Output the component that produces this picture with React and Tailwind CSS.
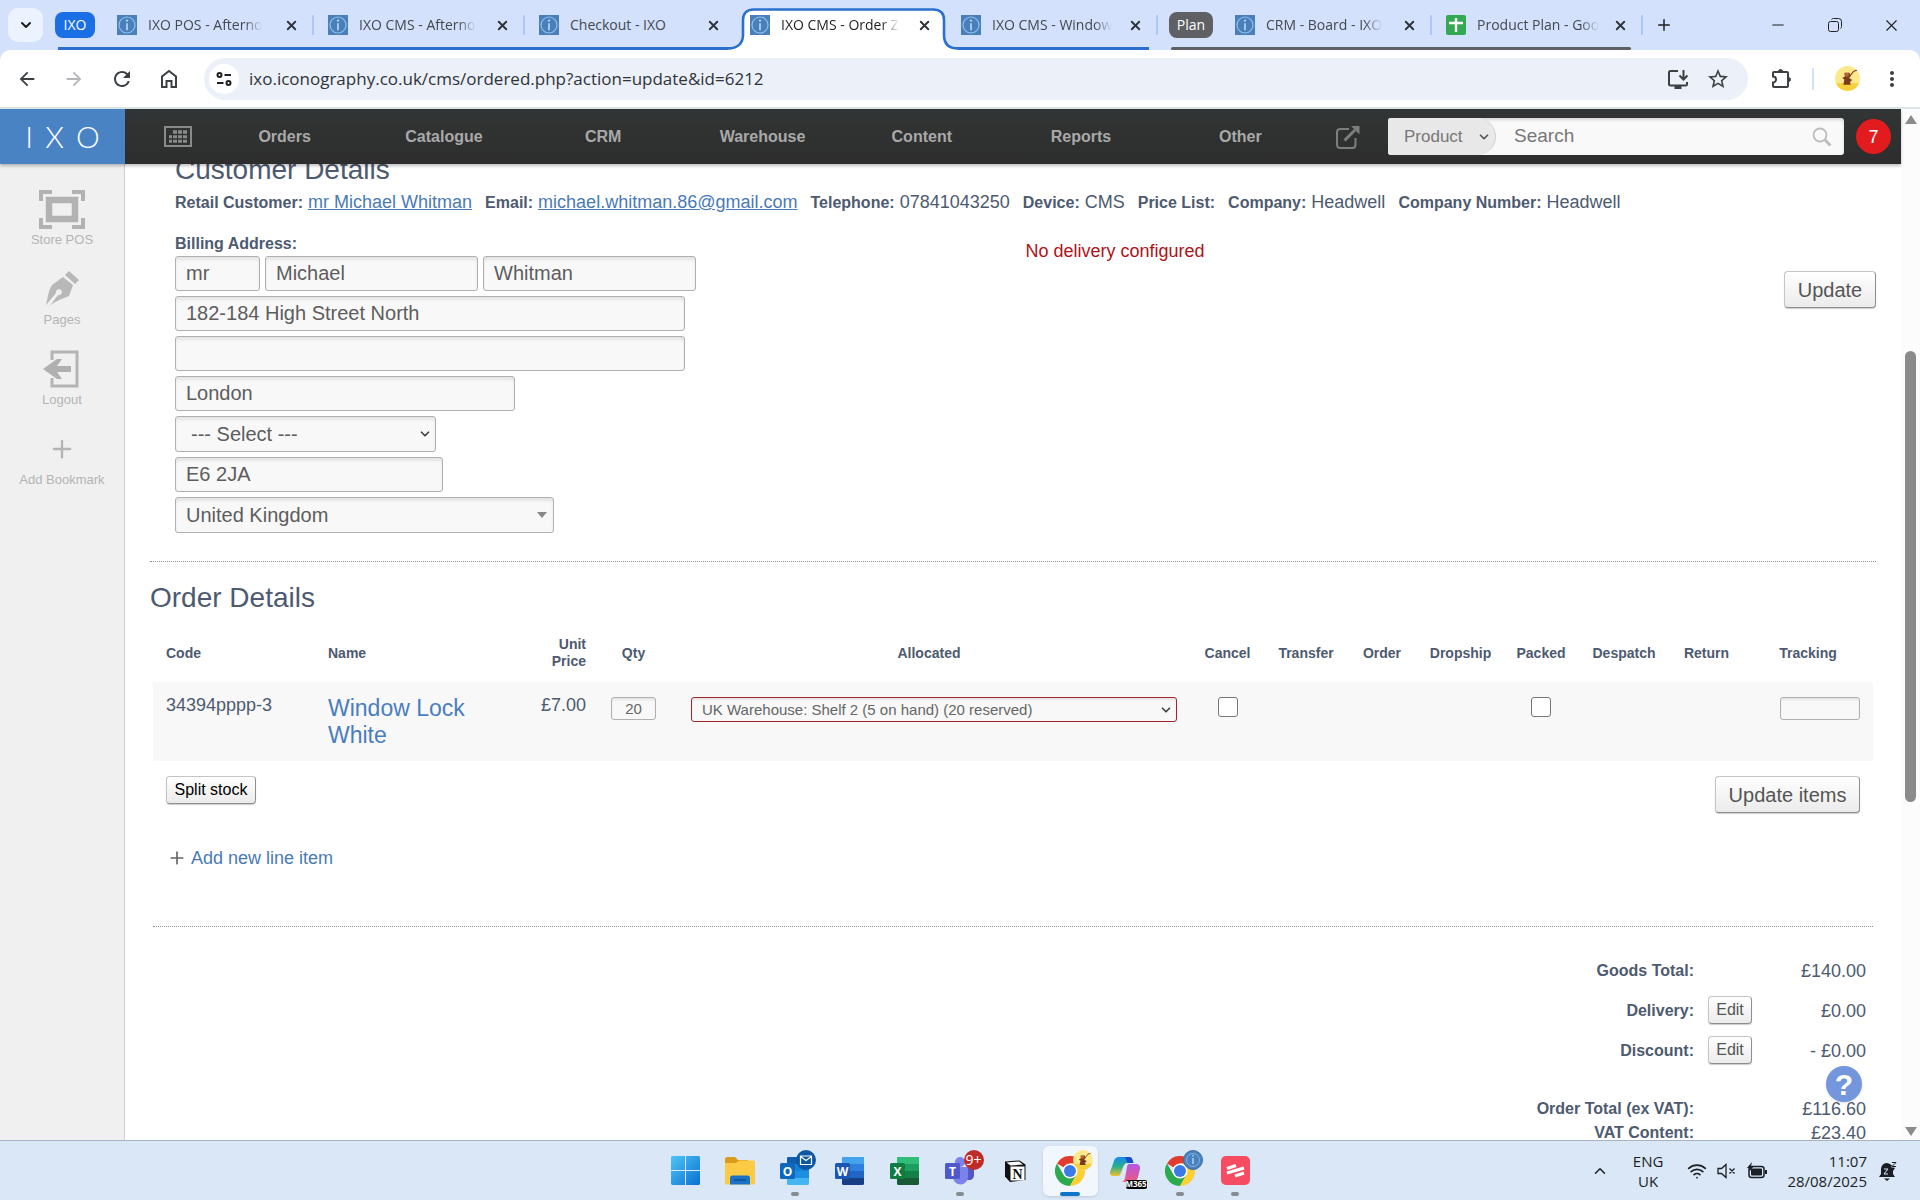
import {
  MdArrowBack,
  MdArrowForward,
  MdRefresh,
  MdStarBorder,
  MdMoreVert,
} from 'react-icons/md';
import { ChevronDown, ChevronUp, Minus, Plus, Wifi, X } from 'lucide-react';

const GROUP_TABS = [
  { id: 1, title: 'IXO POS - Afterno' },
  { id: 2, title: 'IXO CMS - Afterno' },
  { id: 3, title: 'Checkout - IXO', short: true },
  { id: 4, title: 'IXO CMS - Order Z', active: true },
  { id: 5, title: 'IXO CMS - Window' },
];

const PLAN_TABS = [
  { id: 6, title: 'CRM - Board - IXO' },
  { id: 7, title: 'Product Plan - Goo', sheet: true },
];

const NAV_ITEMS = ['Orders', 'Catalogue', 'CRM', 'Warehouse', 'Content', 'Reports', 'Other'];

const CUSTOMER_FIELDS = [
  { label: 'Retail Customer:', value: 'mr Michael Whitman', link: true },
  { label: 'Email:', value: 'michael.whitman.86@gmail.com', link: true },
  { label: 'Telephone:', value: '07841043250' },
  { label: 'Device:', value: 'CMS' },
  { label: 'Price List:', value: '' },
  { label: 'Company:', value: 'Headwell' },
  { label: 'Company Number:', value: 'Headwell' },
];

const ACTION_COLUMNS = ['Cancel', 'Transfer', 'Order', 'Dropship', 'Packed', 'Despatch', 'Return'];

function IxoFavicon() {
  return (
    <svg className="h-5 w-5 shrink-0" viewBox="0 0 20 20">
      <rect width="20" height="20" fill="#4a7fb9" />
      <circle cx="10" cy="10" r="8" fill="none" stroke="#8fc0ee" strokeWidth="1.2" />
      <circle cx="10" cy="5.6" r="1.2" fill="#a9d4fa" />
      <path d="M10 8.2v7" stroke="#a9d4fa" strokeWidth="1.8" />
    </svg>
  );
}

function SheetFavicon() {
  return (
    <svg className="h-5 w-5 shrink-0" viewBox="0 0 20 20">
      <rect width="20" height="20" rx="2" fill="#34a853" />
      <path d="M10 3v14M3 8h14" stroke="#fff" strokeWidth="2.4" />
    </svg>
  );
}

function BeeAvatar({ className }) {
  return (
    <svg className={className} viewBox="0 0 24 24">
      <circle cx="12" cy="12" r="12" fill="#fbe98c" />
      <path d="M1 16.5a12 12 0 0 0 22 0z" fill="#f6cf3a" />
      <path d="M9 6.5h5l1 3-1.5 2 3 2-2 1.5.5 3h-7l1-5-2-1.5 2.5-1.5z" fill="#7c3a1c" />
      <circle cx="11.5" cy="8.5" r="2" fill="#b5683a" />
      <path d="M14 10l4-5 3-1" stroke="#7c3a1c" strokeWidth="1" fill="none" />
    </svg>
  );
}

function BrowserTab({ tab }) {
  return (
    <div className="relative flex w-[211px] min-w-0 items-center pr-[15px] pl-[14px]">
      {tab.active && (
        <svg
          className="absolute top-[7px] left-[-8px] h-[43px] w-[230px]"
          viewBox="0 0 230 43"
          preserveAspectRatio="none"
        >
          <path
            d="M0 41.5C9 41.5 15 37 15 28V13C15 6 19 2.5 26 2.5H205C212 2.5 216 6 216 13V28C216 37 221 41.5 230 41.5V43H0z"
            fill="#fff"
          />
          <path
            d="M0 41.5C9 41.5 15 37 15 28V13C15 6 19 2.5 26 2.5H205C212 2.5 216 6 216 13V28C216 37 221 41.5 230 41.5"
            fill="none"
            stroke="#2b70cd"
            strokeWidth="2.6"
          />
        </svg>
      )}
      <div className="relative flex min-w-0 flex-1 items-center">
        {tab.sheet ? <SheetFavicon /> : <IxoFavicon />}
        <span
          className={`ml-[11px] text-sm whitespace-nowrap ${
            tab.short ? '' : '[mask-image:linear-gradient(to_right,#000_85%,transparent)]'
          } ${tab.active ? 'text-[#1f1f1f]' : 'text-[#44484f]'}`}
        >
          {tab.title}
        </span>
      </div>
      <button className="relative shrink-0 text-[#30343a]" aria-label="Close tab">
        <X className="h-[15px] w-[15px]" strokeWidth={3} />
      </button>
    </div>
  );
}

function TabSeparator() {
  return <span className="-ml-[2px] mt-[15px] h-5 w-[2px] shrink-0 rounded bg-[#a8c7fa]" />;
}

function TabStrip() {
  return (
    <div className="flex h-[50px] text-[#1f1f1f]">
      <button
        className="mt-2 ml-2 flex h-[34px] w-[35px] shrink-0 items-center justify-center rounded-[10px] bg-[#edf3fe]"
        aria-label="Search tabs"
      >
        <ChevronDown className="h-4 w-4" strokeWidth={3} />
      </button>

      <div className="relative ml-3 flex min-w-0">
        <div className="absolute right-[9px] bottom-0 left-[3px] h-[3px] bg-[#2b70cd]" />
        <span className="mt-3 mr-2 flex h-[26px] w-10 shrink-0 items-center justify-center rounded-lg bg-[#1b6fe4] text-sm text-white">
          IXO
        </span>
        {GROUP_TABS.map((tab) => (
          <div key={tab.id} className="flex min-w-0">
            <BrowserTab tab={tab} />
            {(tab.id < 3 || tab.id === 5) && <TabSeparator />}
          </div>
        ))}
      </div>

      <div className="relative ml-[11px] flex min-w-0">
        <div className="absolute right-3 bottom-0 left-[2px] h-[3px] rounded bg-[#5e6064]" />
        <span className="mt-3 mr-2 flex h-[26px] w-11 shrink-0 items-center justify-center rounded-lg bg-[#5e6064] text-sm text-white">
          Plan
        </span>
        {PLAN_TABS.map((tab) => (
          <div key={tab.id} className="flex min-w-0">
            <BrowserTab tab={tab} />
            <TabSeparator />
          </div>
        ))}
      </div>

      <button className="ml-3 shrink-0" aria-label="New tab">
        <Plus className="h-[18px] w-[18px]" strokeWidth={2} />
      </button>

      <div className="ml-auto flex shrink-0">
        <button className="flex w-[57px] items-center justify-center" aria-label="Minimise">
          <Minus className="h-[18px] w-[18px]" strokeWidth={1.4} />
        </button>
        <button className="flex w-[57px] items-center justify-center" aria-label="Restore">
          <svg className="h-[14px] w-[14px]" viewBox="0 0 14 14" fill="none" stroke="currentColor">
            <rect x="0.5" y="3.5" width="10" height="10" rx="2" />
            <path d="M3.5 1.5c.4-.7 1-1 2-1h5a3 3 0 0 1 3 3v5c0 1-.3 1.600-1 2" />
          </svg>
        </button>
        <button className="flex w-[57px] items-center justify-center" aria-label="Close">
          <X className="h-[19px] w-[19px]" strokeWidth={1.4} />
        </button>
      </div>
    </div>
  );
}

function Toolbar() {
  return (
    <div className="flex h-[59px] items-center rounded-t-[10px] border-b-2 border-[#dde4e6] bg-white text-[#3c4043]">
      <div className="flex w-[204px] shrink-0 items-center pl-4">
        <button className="w-12" aria-label="Back">
          <MdArrowBack className="h-[22px] w-[22px]" />
        </button>
        <button className="w-12 text-[#b4b6b9]" aria-label="Forward">
          <MdArrowForward className="h-[22px] w-[22px]" />
        </button>
        <button className="w-12" aria-label="Reload">
          <MdRefresh className="h-6 w-6" />
        </button>
        <button className="w-12" aria-label="Home">
          <svg className="h-6 w-6" viewBox="0 0 24 24" fill="none" stroke="currentColor" strokeWidth="2">
            <path d="M5 20V9.500L12 4l7 5.500V20h-4.500v-6h-5v6z" />
          </svg>
        </button>
      </div>

      <div className="flex h-[42px] flex-1 items-center rounded-full bg-[#ebf0f9] pr-[18px] pl-[5px]">
        <button
          className="flex h-[30px] w-[30px] items-center justify-center rounded-full bg-white text-[#1f1f1f]"
          aria-label="View site information"
        >
          <svg className="h-4 w-4" viewBox="0 0 16 16" fill="none" stroke="currentColor" strokeWidth="2">
            <circle cx="3.500" cy="4" r="2" />
            <path d="M8.500 4H15M1 12h6.500" />
            <circle cx="12.500" cy="12" r="2" />
          </svg>
        </button>
        <input
          aria-label="Address"
          className="ml-[10px] min-w-0 flex-1 bg-transparent text-[17px] text-[#30343a] outline-none"
          defaultValue="ixo.iconography.co.uk/cms/ordered.php?action=update&id=6212"
        />
        <button className="mr-4" aria-label="Install app">
          <svg className="h-6 w-6" viewBox="0 0 24 24" fill="none" stroke="currentColor" strokeWidth="2">
            <path d="M12 4H4.500c-1 0-1.500.5-1.500 1.500V17c0 1 .5 1.500 1.500 1.500h15c1 0 1.500-.5 1.500-1.500v-2" />
            <path d="M8.500 20.500h7" strokeWidth="3" />
            <path d="M17.500 3v9M13.500 8.500l4 4 4-4" />
          </svg>
        </button>
        <button aria-label="Bookmark this tab">
          <MdStarBorder className="h-6 w-6" />
        </button>
      </div>

      <div className="flex w-[172px] shrink-0 items-center justify-end pr-4">
        <button className="mr-[19px]" aria-label="Extensions">
          <svg className="h-6 w-6" viewBox="0 0 24 24" fill="none" stroke="currentColor" strokeWidth="2">
            <path d="M5 5h13c.7 0 1 .3 1 1v13c0 .7-.3 1-1 1H5c-.7 0-1-.3-1-1v-3.500a3 3 0 0 0 0-6V6c0-.7.3-1 1-1z" />
            <path d="M9.500 4.500a2 2 0 0 1 4 0zM19.500 10.500a2 2 0 0 1 0 4z" fill="currentColor" strokeWidth="1" />
          </svg>
        </button>
        <span className="mr-[21px] h-[22px] w-[2px] bg-[#d3e1fd]" />
        <button className="mr-5" aria-label="Profile">
          <BeeAvatar className="h-[25px] w-[25px]" />
        </button>
        <button aria-label="Chrome menu">
          <MdMoreVert className="h-6 w-6" />
        </button>
      </div>
    </div>
  );
}

function CalendarIcon() {
  return (
    <svg className="h-[21px] w-7" viewBox="0 0 28 21" fill="none" stroke="#8a8a8a">
      <rect x="1" y="1" width="26" height="19" strokeWidth="2" />
      <path d="M9 6h4M14 6h4M19 6h4" strokeWidth="3.500" />
      <path d="M5 10.800h3M9 10.800h4M14 10.800h4M19 10.800h4" strokeWidth="3" />
      <path d="M5 15.300h3M9 15.300h4M14 15.300h4M19 15.300h4" strokeWidth="3" />
    </svg>
  );
}

function MainNav() {
  return (
    <header className="relative z-10 flex h-[55px] shrink-0 bg-linear-to-b from-[#323535] to-[#2d2d2d] shadow-[0_2px_3px_rgba(0,0,0,0.25)]">
      <a
        href="#home"
        className="flex w-[125px] shrink-0 items-center justify-center gap-3 bg-[#4a83c3] font-['Lato',sans-serif] text-[30px] font-light text-white"
      >
        <span>I</span>
        <span>X</span>
        <span>O</span>
      </a>
      <a href="#calendar" className="flex w-20 shrink-0 items-center justify-end pr-[13px]" aria-label="Calendar">
        <CalendarIcon />
      </a>
      <nav className="flex flex-1">
        {NAV_ITEMS.map((item) => (
          <a
            key={item}
            href={`#${item.toLowerCase()}`}
            className="flex flex-1 items-center justify-center text-base font-bold text-[#a9a9a9]"
          >
            {item}
          </a>
        ))}
      </nav>
      <a href="#open" className="flex w-[68px] shrink-0 items-center pl-4" aria-label="Open shop">
        <svg className="h-6 w-6" viewBox="0 0 24 24" fill="none" stroke="#7d7d7d" strokeWidth="2">
          <path d="M13 4H4.500C2.500 4 1 5 1 7v12.500C1 21.500 2.500 23 4.500 23h12c2 0 3-1.500 3-3.500V13" />
          <path d="M8.500 15.500L19 5" strokeWidth="3" />
          <path d="M15 1h8.500v8.500z" fill="#7d7d7d" stroke="none" />
        </svg>
      </a>
      <div className="my-auto flex h-[37px] w-[456px] overflow-hidden rounded-[3px] bg-[#f9f9f9] shadow-[inset_0_2px_3px_rgba(0,0,0,0.15)]">
        <div className="relative w-[108px] rounded-r-[20px] border-r border-[#cfcfcf] bg-[#e8e8e8]">
          <select
            aria-label="Search type"
            className="h-full w-full appearance-none bg-transparent pl-4 text-[17px] text-[#777] outline-none"
          >
            <option>Product</option>
          </select>
          <ChevronDown className="pointer-events-none absolute top-3 right-1 h-[14px] w-[14px] text-[#555]" strokeWidth={3} />
        </div>
        <input
          aria-label="Search"
          placeholder="Search"
          className="min-w-0 flex-1 bg-transparent pl-[18px] text-[19px] text-[#555] outline-none placeholder:text-[#777]"
        />
        <button className="pr-3" aria-label="Go">
          <svg className="h-5 w-5" viewBox="0 0 20 20" fill="none" stroke="#bdbdbd">
            <circle cx="8" cy="8" r="6.500" strokeWidth="1.800" />
            <path d="M12.500 12.500l6 6" strokeWidth="3" />
          </svg>
        </button>
      </div>
      <button className="my-auto mr-[10px] ml-3 h-[35px] w-[35px] shrink-0 rounded-full bg-[#e21b1f] text-lg text-white">
        7
      </button>
    </header>
  );
}

function SideLink({ label, children }) {
  return (
    <a href={`#${label}`} className="flex h-20 flex-col items-center text-[13px] leading-5 text-[#b4b4b4]">
      <span className="flex h-[46px] items-center justify-center pt-1">{children}</span>
      <span>{label}</span>
    </a>
  );
}

function Sidebar() {
  return (
    <aside className="w-[125px] shrink-0 border-r border-[#cfcfcf] bg-[#f0f0f0] pt-5">
      <SideLink label="Store POS">
        <svg className="h-[39px] w-[46px]" viewBox="0 0 46 39" fill="none" stroke="#b2b2b2">
          <path d="M2 11V2h11M33 2h11v9M44 28v9H33M13 37H2v-9" strokeWidth="4" />
          <rect x="10" y="10" width="26" height="19" strokeWidth="6.500" />
        </svg>
      </SideLink>
      <SideLink label="Pages">
        <svg className="h-[38px] w-[38px]" viewBox="0 0 38 38" fill="#b8b8b8">
          <path d="M26 1l10 9-4 4-10-9z" />
          <path d="M20 7l10 8-4 11c-7 3-15 5-20 11l9-12a3 3 0 1 0-2-2L3 35C5 26 6 19 9 15z" />
        </svg>
      </SideLink>
      <SideLink label="Logout">
        <svg className="h-[38px] w-[38px]" viewBox="0 0 38 38">
          <path d="M9 10V2h25v34H9v-8" fill="none" stroke="#b4b4b4" strokeWidth="3" />
          <path d="M0 19L14 9h5l-5 7h14v6H14l5 7h-5z" fill="#b0b0b0" />
        </svg>
      </SideLink>
      <SideLink label="Add Bookmark">
        <Plus className="h-7 w-7" strokeWidth={2} />
      </SideLink>
    </aside>
  );
}

const fieldClass =
  'rounded-[3px] border border-[#b0b0b0] bg-[#f8f8f8] px-[10px] text-xl text-[#5d5d5d] shadow-[inset_0_3px_3px_rgba(0,0,0,0.08)] outline-none';

const buttonClass =
  'rounded-[4px] border border-[#c4c4c4] border-r-[#8e8e8e] border-b-[#8e8e8e] bg-linear-to-b from-white to-[#ebebeb] shadow-[0_1px_1px_rgba(0,0,0,0.2)]';

function CustomerDetails() {
  return (
    <section className="-mt-3 border-b border-dotted border-[#8c8c8c] pb-7 pl-[25px]">
      <h2 className="text-[28px] leading-9">Customer Details</h2>
      <div className="mt-[2px] flex flex-wrap gap-x-[13px] text-lg leading-6">
        {CUSTOMER_FIELDS.map(({ label, value, link }) => (
          <span key={label}>
            <strong className="text-base leading-6">{label}</strong>{' '}
            {link ? (
              <a href="#customer" className="text-[#4a7ab5] underline">
                {value}
              </a>
            ) : (
              value
            )}
          </span>
        ))}
      </div>

      <div className="mt-[17px] grid grid-cols-2">
        <fieldset>
          <legend className="text-base leading-6 font-bold">Billing Address:</legend>
          <div className="flex flex-col items-start gap-[5px]">
            <div className="flex gap-[5px]">
              <input aria-label="Title" className={`${fieldClass} h-[35px] w-[85px]`} defaultValue="mr" />
              <input aria-label="First name" className={`${fieldClass} h-[35px] w-[213px]`} defaultValue="Michael" />
              <input aria-label="Last name" className={`${fieldClass} h-[35px] w-[213px]`} defaultValue="Whitman" />
            </div>
            <input
              aria-label="Address line 1"
              className={`${fieldClass} h-[35px] w-[510px]`}
              defaultValue="182-184 High Street North"
            />
            <input aria-label="Address line 2" className={`${fieldClass} h-[35px] w-[510px]`} />
            <input aria-label="City" className={`${fieldClass} h-[35px] w-[340px]`} defaultValue="London" />
            <div className="relative">
              <select aria-label="County" className={`${fieldClass} block h-9 w-[261px] appearance-none pl-[15px]`}>
                <option>--- Select ---</option>
              </select>
              <ChevronDown className="pointer-events-none absolute top-[11px] right-1 h-[14px] w-[14px] text-[#444]" strokeWidth={3} />
            </div>
            <input aria-label="Postcode" className={`${fieldClass} h-[35px] w-[268px]`} defaultValue="E6 2JA" />
            <div className="relative">
              <select aria-label="Country" className={`${fieldClass} block h-9 w-[379px] appearance-none`}>
                <option>United Kingdom</option>
              </select>
              <svg className="pointer-events-none absolute top-[15px] right-[7px] h-[6px] w-[10px]" viewBox="0 0 10 6">
                <path d="M0 0h10L5 6z" fill="#888" />
              </svg>
            </div>
          </div>
        </fieldset>
        <div className="flex flex-col pt-[7px]">
          <p className="text-lg leading-6 text-[#b01217]">No delivery configured</p>
          <button className={`${buttonClass} mt-2 h-[37px] w-[92px] self-end text-xl text-[#555]`}>Update</button>
        </div>
      </div>
    </section>
  );
}

const smallFieldClass =
  'rounded-[3px] border bg-[#f8f8f8] text-[15px] text-[#666] shadow-[inset_0_2px_2px_rgba(0,0,0,0.08)] outline-none';

function OrderDetails() {
  return (
    <section className="pt-[18px]">
      <h2 className="text-[28px] leading-9">Order Details</h2>
      <div className="mx-[3px] border-b border-dotted border-[#8c8c8c] pb-[51px]">
        <table className="mt-2 w-full table-fixed text-left">
          <colgroup>
            <col className="w-[162px]" />
            <col />
            <col className="w-[104px]" />
            <col className="w-[69px]" />
            <col className="w-[522px]" />
            <col className="w-[75px]" />
            <col className="w-[82px]" />
            <col className="w-[70px]" />
            <col className="w-[87px]" />
            <col className="w-[74px]" />
            <col className="w-[92px]" />
            <col className="w-[73px]" />
            <col className="w-[130px]" />
          </colgroup>
          <thead>
            <tr className="h-[58px] text-sm leading-[17px]">
              <th className="px-[13px]">Code</th>
              <th className="px-[13px]">Name</th>
              <th className="px-[13px] text-right">
                Unit
                <br />
                Price
              </th>
              <th className="text-center">Qty</th>
              <th className="text-center">Allocated</th>
              {ACTION_COLUMNS.map((col) => (
                <th key={col} className="text-center">
                  {col}
                </th>
              ))}
              <th className="text-center">Tracking</th>
            </tr>
          </thead>
          <tbody>
            <tr className="h-[79px] bg-[#f8f8f8] align-top text-lg leading-5">
              <td className="px-[13px] pt-[13px]">34394pppp-3</td>
              <td className="px-[13px] pt-[13px] text-[23px] leading-[27px]">
                <a href="#item" className="text-[#4a7dc0]">
                  Window Lock White
                </a>
              </td>
              <td className="px-[13px] pt-[13px] text-right">£7.00</td>
              <td className="px-3 pt-[15px]">
                <input
                  aria-label="Quantity"
                  className={`${smallFieldClass} block h-[23px] w-full border-[#b0b0b0] text-center`}
                  defaultValue="20"
                />
              </td>
              <td className="pt-[15px] pr-[13px] pl-[23px]">
                <div className="relative">
                  <select
                    aria-label="Allocated"
                    className={`${smallFieldClass} block h-[25px] w-full appearance-none border-[#a3242c] pl-[10px]`}
                  >
                    <option>UK Warehouse: Shelf 2 (5 on hand) (20 reserved)</option>
                  </select>
                  <ChevronDown className="pointer-events-none absolute top-[6px] right-1 h-[14px] w-[14px] text-[#444]" strokeWidth={3} />
                </div>
              </td>
              {ACTION_COLUMNS.map((col) => (
                <td key={col} className="pt-[15px]">
                  {(col === 'Cancel' || col === 'Packed') && (
                    <input
                      type="checkbox"
                      aria-label={col}
                      className="mx-auto block h-5 w-5 appearance-none rounded-[3px] border border-[#767676] bg-white"
                    />
                  )}
                </td>
              ))}
              <td className="pt-[15px] pr-[13px]">
                <input
                  aria-label="Tracking"
                  className={`${smallFieldClass} ml-auto block h-[23px] w-20 border-[#b0b0b0]`}
                />
              </td>
            </tr>
          </tbody>
        </table>
        <div className="flex items-start justify-between px-[13px] pt-[15px]">
          <button className={`${buttonClass} h-7 w-[90px] text-base leading-5 text-black`}>Split stock</button>
          <button className={`${buttonClass} h-[37px] w-[145px] text-xl text-[#555]`}>Update items</button>
        </div>
        <a href="#add" className="mt-[33px] ml-[14px] inline-flex h-6 items-center text-lg text-[#4a7ab5]">
          <Plus className="mr-1 h-5 w-5 text-[#666]" strokeWidth={2} />
          Add new line item
        </a>
      </div>
    </section>
  );
}

function OrderTotals() {
  return (
    <table className="mt-6 mr-[10px] ml-auto text-right text-lg leading-6">
      <tbody>
        <tr className="h-10">
          <th className="text-base">Goods Total:</th>
          <td className="w-[72px]" />
          <td className="w-[100px]">£140.00</td>
        </tr>
        {[
          { label: 'Delivery:', value: '£0.00' },
          { label: 'Discount:', value: '- £0.00' },
        ].map((row) => (
          <tr key={row.label} className="h-10">
            <th className="text-base">{row.label}</th>
            <td className="w-[72px]">
              <button className={`${buttonClass} mx-auto mb-[2px] block h-7 w-11 text-base text-[#555]`}>Edit</button>
            </td>
            <td>{row.value}</td>
          </tr>
        ))}
        <tr className="h-[50px] align-bottom">
          <th className="text-base">Order Total (ex VAT):</th>
          <td />
          <td>£116.60</td>
        </tr>
        <tr className="h-6 align-bottom">
          <th className="text-base">VAT Content:</th>
          <td />
          <td>£23.40</td>
        </tr>
      </tbody>
    </table>
  );
}

function Scrollbar() {
  return (
    <div className="grid w-[19px] shrink-0 grid-rows-[242fr_451fr_338fr] justify-items-center bg-[#fcfcfc]">
      <svg className="mt-[6px] h-[9px] w-3" viewBox="0 0 12 9">
        <path d="M6 0l6 9H0z" fill="#8b8b8b" />
      </svg>
      <div className="w-[11px] rounded-full bg-[#8b8b8b]" />
      <svg className="mb-1 h-[9px] w-3 self-end" viewBox="0 0 12 9">
        <path d="M0 0h12L6 9z" fill="#8b8b8b" />
      </svg>
    </div>
  );
}

function OfficeIcon({ letter, tile, shades }) {
  return (
    <svg className="h-[30px] w-[30px]" viewBox="0 0 30 30">
      <rect x="7" y="1" width="22" height="28" rx="1.500" fill={shades[3]} />
      <path d="M7 2.500C7 1.500 7.500 1 8.500 1h19c1 0 1.500.5 1.500 1.500V8H7z" fill={shades[0]} />
      <path d="M7 8h22v7H7z" fill={shades[1]} />
      <path d="M7 15h22v7H7z" fill={shades[2]} />
      <rect x="0" y="7" width="15" height="16" rx="1.500" fill={tile} />
      <text x="7.500" y="19.500" textAnchor="middle" fill="#fff" fontSize="12" fontWeight="700">
        {letter}
      </text>
    </svg>
  );
}

function ChromeIcon() {
  return (
    <svg className="h-[30px] w-[30px]" viewBox="0 0 30 30">
      <path d="M15 15L2 7.500a15 15 0 0 1 26 0H15z" fill="#e33b2e" />
      <path d="M15 15l6.500 3.750L15 30a15 15 0 0 1-13-22.500l6.500 11.250z" fill="#2da94f" />
      <path d="M15 30l6.500-11.250L21.500 11 15 7.500h13A15 15 0 0 1 15 30z" fill="#fdd032" />
      <circle cx="15" cy="15" r="7.500" fill="#fff" />
      <circle cx="15" cy="15" r="6" fill="#3b79e6" />
    </svg>
  );
}

function TaskbarSlot({ label, running, active, badge, children }) {
  return (
    <button
      aria-label={label}
      className={`relative flex h-[50px] w-[55px] items-center justify-center ${
        active ? 'rounded-md bg-[#f2f7fd] shadow-sm' : ''
      }`}
    >
      {children}
      {badge}
      {running && <span className="absolute bottom-0 h-1 w-2 rounded-full bg-[#858b93]" />}
      {active && <span className="absolute bottom-0 h-1 w-5 rounded-full bg-[#0f75c8]" />}
    </button>
  );
}

function Taskbar() {
  return (
    <footer className="grid h-[60px] shrink-0 grid-cols-[1fr_auto_1fr] items-center border-t border-[#a9b2be] bg-[#dae7f7]">
      <div />
      <div className="flex">
        <TaskbarSlot label="Start">
          <svg className="h-[29px] w-[29px]" viewBox="0 0 29 29">
            <defs>
              <linearGradient id="win" x1="0" y1="0" x2="29" y2="29" gradientUnits="userSpaceOnUse">
                <stop offset="0" stopColor="#4fc6f8" />
                <stop offset="1" stopColor="#0a6fd0" />
              </linearGradient>
            </defs>
            <path d="M1 0h13v14H0V1zM15 0h13l1 1v13H15zM0 15h14v14H1l-1-1zM15 15h14v13l-1 1H15z" fill="url(#win)" />
          </svg>
        </TaskbarSlot>
        <TaskbarSlot label="File Explorer">
          <svg className="h-[28px] w-[30px]" viewBox="0 0 30 28">
            <path d="M0 2.500C0 1 1 0 2 0h8l3 3h10v6H0z" fill="#dc9a1c" />
            <path d="M0 6h11l3-2.500h14.500c1 0 1.500.5 1.500 1.500v21c0 1-.5 1.500-1.500 1.500h-27C.5 27.500 0 27 0 26z" fill="#fccb45" />
            <path d="M5 27.500V21c0-1.500 1-2.500 2.500-2.500h15c1.500 0 2.500 1 2.500 2.500v6.500z" fill="#1a73c4" />
            <path d="M9 23h12" stroke="#0d4f94" strokeWidth="1.500" />
          </svg>
        </TaskbarSlot>
        <TaskbarSlot
          label="Outlook"
          running
          badge={
            <svg className="absolute top-[4px] right-[7px] h-5 w-5" viewBox="0 0 20 20">
              <circle cx="10" cy="10" r="10" fill="#0d57a3" />
              <path d="M4.500 6h11v8.500h-11zM4.500 6.500L10 10.500l5.500-4" fill="none" stroke="#fff" strokeWidth="1.200" />
            </svg>
          }
        >
          <OfficeIcon letter="O" tile="#1068bd" shades={['#0f5fae', '#1681d8', '#1c8fe3', '#46b5f2']} />
        </TaskbarSlot>
        <TaskbarSlot label="Word">
          <OfficeIcon letter="W" tile="#1d55b3" shades={['#44a3ec', '#2f80dc', '#2064c4', '#163f86']} />
        </TaskbarSlot>
        <TaskbarSlot label="Excel">
          <OfficeIcon letter="X" tile="#117c41" shades={['#2fbd7a', '#1f9f5f', '#138048', '#185c37']} />
        </TaskbarSlot>
        <TaskbarSlot
          label="Teams"
          running
          badge={
            <span className="absolute top-[4px] right-1 flex h-5 w-5 items-center justify-center rounded-full bg-[#bf2c28] text-sm text-white">
              9+
            </span>
          }
        >
          <svg className="h-[30px] w-[30px]" viewBox="0 0 30 30">
            <circle cx="15" cy="6" r="5" fill="#7b83eb" />
            <path d="M20 11h9v8c0 3-2 5-5 5h-4z" fill="#5058c8" />
            <path d="M8 11h15v10a7.500 7.500 0 0 1-15 0z" fill="#7b83eb" />
            <rect x="0" y="7" width="15" height="16" rx="1.500" fill="#5059c9" />
            <text x="7.500" y="19.500" textAnchor="middle" fill="#fff" fontSize="12" fontWeight="700">
              T
            </text>
          </svg>
        </TaskbarSlot>
        <TaskbarSlot label="Notion">
          <svg className="h-6 w-6" viewBox="0 0 24 24">
            <path d="M2 2.500L16.500 1.500l6 4V21l-15.500 2L2 17.500z" fill="#111" />
            <path d="M3.500 3.500l12.500-1 4 3-12.500 1z" fill="#fff" />
            <rect x="7.500" y="7.500" width="14" height="14" fill="#fff" />
            <text x="14.500" y="19.500" textAnchor="middle" fill="#111" fontSize="14" fontWeight="700" fontFamily="Liberation Serif, serif">
              N
            </text>
          </svg>
        </TaskbarSlot>
        <TaskbarSlot label="Chrome" active badge={<BeeAvatar className="absolute top-[4px] right-[5px] h-5 w-5" />}>
          <ChromeIcon />
        </TaskbarSlot>
        <TaskbarSlot
          label="Microsoft 365 Copilot"
          badge={
            <span className="absolute right-[6px] bottom-[7px] flex h-[9px] w-[21px] items-center justify-center rounded-[2px] bg-black text-[8px] font-bold text-white">
              M365
            </span>
          }
        >
          <svg className="h-[28px] w-[30px]" viewBox="0 0 30 28">
            <defs>
              <linearGradient id="copA" x1="0" y1="0" x2="0" y2="1">
                <stop offset="0" stopColor="#1787ee" />
                <stop offset="0.5" stopColor="#28b08c" />
                <stop offset="1" stopColor="#f0c02c" />
              </linearGradient>
              <linearGradient id="copB" x1="0" y1="0" x2="0" y2="1">
                <stop offset="0" stopColor="#b357e8" />
                <stop offset="1" stopColor="#ee5a7c" />
              </linearGradient>
            </defs>
            <path d="M9 0h10c2 0 3 1 3.500 3l1 3h-6c-2 0-3 1-4 3l-3 8c-.5 1.500-1.500 2-3 2H3c-2 0-3.500-1.500-3-4L4 4c1-3 2.500-4 5-4z" fill="url(#copA)" />
            <path d="M19 0c2 0 3 1 3.500 3l1 3h-6L15 0z" fill="#1b4ec4" />
            <path d="M19 7h7c3 0 4.500 2 4 5l-2 8c-1 3-2 5-5 5H11c2 0 3-1 4-4l2-11c.5-2 1-3 2-3z" fill="url(#copB)" />
          </svg>
        </TaskbarSlot>
        <TaskbarSlot
          label="Chrome IXO"
          running
          badge={
            <svg className="absolute top-[4px] right-[5px] h-5 w-5" viewBox="0 0 20 20">
              <circle cx="10" cy="10" r="9.500" fill="#4a82be" stroke="#3a6da5" />
              <circle cx="10" cy="10" r="6.500" fill="none" stroke="#7fb2e3" />
              <path d="M10 5v1.500M10 8v6" stroke="#a9d4fa" strokeWidth="1.500" />
            </svg>
          }
        >
          <ChromeIcon />
        </TaskbarSlot>
        <TaskbarSlot label="Scribe" running>
          <svg className="h-[29px] w-[29px]" viewBox="0 0 29 29">
            <rect width="29" height="29" rx="5" fill="#f74b62" />
            <path d="M6 12.500l9-3M6 17l17-5M14 20l9-3" stroke="#fff" strokeWidth="3.200" />
          </svg>
        </TaskbarSlot>
      </div>

      <div className="flex items-center justify-end pr-[23px] text-[15px] leading-5 text-[#1b1f24]">
        <ChevronUp className="h-[18px] w-[18px]" strokeWidth={2} />
        <div className="mx-6 text-center">
          ENG
          <br />
          UK
        </div>
        <Wifi className="h-5 w-5" strokeWidth={2} />
        <svg className="ml-[10px] h-5 w-5" viewBox="0 0 20 20" fill="none" stroke="currentColor" strokeWidth="1.300">
          <path d="M1 7.500h3.500L9 3.500v13l-4.500-4H1zM12.500 7.500l5 5M17.500 7.500l-5 5" />
        </svg>
        <svg className="ml-[10px] h-5 w-5" viewBox="0 0 20 20">
          <rect x="2" y="5.500" width="15" height="11" rx="2.500" fill="none" stroke="currentColor" strokeWidth="1.500" />
          <rect x="4" y="7.500" width="11" height="7" rx="1" fill="currentColor" />
          <path d="M18 9v4h2V9z" fill="currentColor" />
          <path d="M5 1L0 7h3l-1 4 5-6H4z" fill="currentColor" />
        </svg>
        <div className="ml-5 text-right">
          11:07
          <br />
          28/08/2025
        </div>
        <svg className="ml-3 h-5 w-[18px]" viewBox="0 0 18 20">
          <path d="M8 2C4 2 2 5 2 9v4l-2 3h16l-2-3v-3l2-3-5-4zM5 17.500h6l-3 2.500z" fill="currentColor" />
          <path d="M5 8h4l-4 5h4M12.500 1h4.500l-4.500 5h4.500" fill="none" stroke="#dae7f7" strokeWidth="1" />
          <path d="M13 1.500h4l-4 4h4" fill="none" stroke="currentColor" strokeWidth="1" />
        </svg>
      </div>
    </footer>
  );
}

export default function App() {
  return (
    <div className="flex h-screen flex-col overflow-hidden bg-[#d3e1fd] font-['Open_Sans','Noto_Sans',sans-serif]">
      <TabStrip />
      <Toolbar />
      <div className="flex min-h-0 flex-1 bg-white font-['Liberation_Sans',Arial,sans-serif] text-[#4d5a70]">
        <div className="flex min-w-0 flex-1 flex-col">
          <MainNav />
          <div className="relative flex min-h-0 flex-1">
            <Sidebar />
            <main className="min-w-0 flex-1 overflow-hidden px-[25px]">
              <CustomerDetails />
              <OrderDetails />
              <OrderTotals />
            </main>
            <button className="absolute right-[39px] bottom-[38px] flex h-9 w-9 items-center justify-center rounded-full bg-[#7396dc] text-[30px] font-bold text-white shadow">
              ?
            </button>
          </div>
        </div>
        <Scrollbar />
      </div>
      <Taskbar />
    </div>
  );
}
